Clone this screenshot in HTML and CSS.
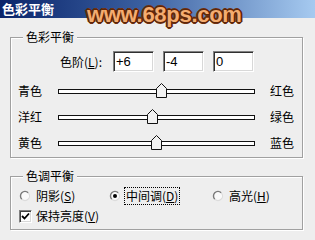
FILE: index.html
```html
<!DOCTYPE html>
<html>
<head>
<meta charset="utf-8">
<link rel="stylesheet" href="styles.css">
</head>
<body>
<div class="titlebar"><span class="title">色彩平衡</span></div>
<div class="watermark">www.68ps.com</div>
<div class="body">
  <fieldset class="group">
    <legend>色彩平衡</legend>
    <div class="balance-inner">
      <div class="levels">
        <span class="levels-label">色阶(<u>L</u>):</span>
        <input class="num" value="+6">
        <input class="num" value="-4">
        <input class="num" value="0">
      </div>
      <div class="sliders">
        <div class="slider-row">
          <span class="lbl-left">青色</span>
          <div class="track"><svg class="thumb" style="left:53%" width="11" height="15" viewBox="0 0 11 15"><polygon points="0.5,5.5 5.5,0.5 10.5,5.5 10.5,14.5 0.5,14.5" fill="#f2f2f2" stroke="#111"/></svg></div>
          <span class="lbl-right">红色</span>
        </div>
        <div class="slider-row">
          <span class="lbl-left">洋红</span>
          <div class="track"><svg class="thumb" style="left:48%" width="11" height="15" viewBox="0 0 11 15"><polygon points="0.5,5.5 5.5,0.5 10.5,5.5 10.5,14.5 0.5,14.5" fill="#f2f2f2" stroke="#111"/></svg></div>
          <span class="lbl-right">绿色</span>
        </div>
        <div class="slider-row">
          <span class="lbl-left">黄色</span>
          <div class="track"><svg class="thumb" style="left:50.5%" width="11" height="15" viewBox="0 0 11 15"><polygon points="0.5,5.5 5.5,0.5 10.5,5.5 10.5,14.5 0.5,14.5" fill="#f2f2f2" stroke="#111"/></svg></div>
          <span class="lbl-right">蓝色</span>
        </div>
      </div>
    </div>
  </fieldset>
  <fieldset class="group tone">
    <legend>色调平衡</legend>
    <div class="tone-inner">
      <div class="radios">
        <div class="radio">
          <svg width="12" height="12" viewBox="0 0 12 12"><circle cx="6" cy="6" r="4.5" fill="#fafafa"/><path d="M9.2 2.8 A4.5 4.5 0 0 0 2.8 9.2" fill="none" stroke="#7a7a7a" stroke-width="1.4"/><path d="M2.8 9.2 A4.5 4.5 0 0 0 9.2 2.8" fill="none" stroke="#dcdcdc" stroke-width="1.2"/></svg>
          <span>阴影(<u>S</u>)</span>
        </div>
        <div class="radio">
          <svg width="12" height="12" viewBox="0 0 12 12"><circle cx="6" cy="6" r="4.5" fill="#fafafa"/><path d="M9.2 2.8 A4.5 4.5 0 0 0 2.8 9.2" fill="none" stroke="#7a7a7a" stroke-width="1.4"/><path d="M2.8 9.2 A4.5 4.5 0 0 0 9.2 2.8" fill="none" stroke="#dcdcdc" stroke-width="1.2"/><circle cx="6" cy="6" r="2" fill="#000"/></svg>
          <span class="focus">中间调(<u>D</u>)</span>
        </div>
        <div class="radio">
          <svg width="12" height="12" viewBox="0 0 12 12"><circle cx="6" cy="6" r="4.5" fill="#fafafa"/><path d="M9.2 2.8 A4.5 4.5 0 0 0 2.8 9.2" fill="none" stroke="#7a7a7a" stroke-width="1.4"/><path d="M2.8 9.2 A4.5 4.5 0 0 0 9.2 2.8" fill="none" stroke="#dcdcdc" stroke-width="1.2"/></svg>
          <span>高光(<u>H</u>)</span>
        </div>
      </div>
      <div class="check">
        <span class="box"><svg width="9" height="9" viewBox="0 0 9 9"><polyline points="1,4 3.5,6.5 8,1.5" fill="none" stroke="#000" stroke-width="1.8"/></svg></span>
        <span>保持亮度(<u>V</u>)</span>
      </div>
    </div>
  </fieldset>
</div>
</body>
</html>
```
FILE: styles.css
```css
html, body {
  margin: 0;
  padding: 0;
}
body {
  width: 315px;
  height: 240px;
  overflow: hidden;
  position: relative;
  background: #eeeeee;
  font-family: "Noto Sans CJK SC", "Noto Sans", sans-serif;
  font-size: 12px;
  line-height: 14px;
  color: #000;
}
u {
  text-decoration: underline;
  text-underline-offset: 1px;
}
.titlebar {
  height: 18px;
  background: linear-gradient(to right, #0a246a 0%, #3a5fa0 45%, #a6caf0 100%);
  display: flex;
  align-items: center;
  padding-left: 2px;
}
.title {
  color: #fff;
  font-weight: bold;
  font-size: 13px;
  line-height: 14px;
}
.watermark {
  position: absolute;
  left: 87px;
  top: 4px;
  font-family: "Liberation Sans", Arial, sans-serif;
  font-weight: bold;
  font-size: 22px;
  line-height: 22px;
  letter-spacing: -0.3px;
  color: #f4ac70;
  text-shadow:
    1px 0 #5e2608, -1px 0 #5e2608, 0 1px #5e2608, 0 -1px #5e2608,
    1px 1px #5e2608, -1px -1px #5e2608, 1px -1px #5e2608, -1px 1px #5e2608,
    2px 0 #6e3010, -2px 0 #6e3010, 0 2px #6e3010, 0 -2px #6e3010;
}
.body {
  padding: 12px 12px 0 10px;
}
.group {
  margin: 0;
  padding: 0;
  min-width: 0;
  border: 1px solid #a0a0a0;
  box-shadow: inset 1px 1px #ffffff, 1px 1px #ffffff;
}
.group legend {
  margin-left: 12px;
  padding: 0 3px;
  line-height: 14px;
  background: #eeeeee;
}
.tone {
  margin-top: 11px;
}
.balance-inner {
  padding: 7px 0 1px 7px;
}
.levels {
  display: flex;
  align-items: center;
  padding-left: 42px;
}
.levels-label {
  width: 53px;
}
.num {
  box-sizing: border-box;
  width: 41px;
  height: 21px;
  margin: 0 9px 0 0;
  padding: 0 0 0 2px;
  background: #fff;
  border: 1px solid;
  border-color: #808080 #ffffff #ffffff #808080;
  box-shadow: inset 1px 1px #303030, inset -1px -1px #d8d8d8;
  font-family: "Liberation Sans", Arial, sans-serif;
  font-size: 13px;
  color: #000;
  outline: none;
}
.sliders {
  margin-top: 6px;
}
.slider-row {
  display: flex;
  align-items: center;
  height: 26px;
}
.lbl-left {
  width: 40px;
}
.track {
  position: relative;
  box-sizing: border-box;
  width: 197px;
  height: 5px;
  background: #fff;
  border: 1px solid #111;
}
.thumb {
  position: absolute;
  top: -7px;
  margin-left: -6px;
}
.lbl-right {
  margin-left: 15px;
}
.tone-inner {
  padding: 3px 0 3px 8px;
}
.radios {
  display: grid;
  grid-template-columns: 90px 103px auto;
  height: 20px;
  align-items: center;
}
.radio {
  display: flex;
  align-items: center;
  gap: 5px;
}
.focus {
  outline: 1px dotted #000;
  outline-offset: 1px;
}
.check {
  display: flex;
  align-items: center;
  gap: 4px;
  height: 20px;
}
.box {
  box-sizing: border-box;
  width: 13px;
  height: 13px;
  background: #fff;
  border: 1px solid;
  border-color: #808080 #ffffff #ffffff #808080;
  box-shadow: inset 1px 1px #404040, inset -1px -1px #d8d8d8;
  display: flex;
  align-items: center;
  justify-content: center;
}
.box svg {
  display: block;
}
```
